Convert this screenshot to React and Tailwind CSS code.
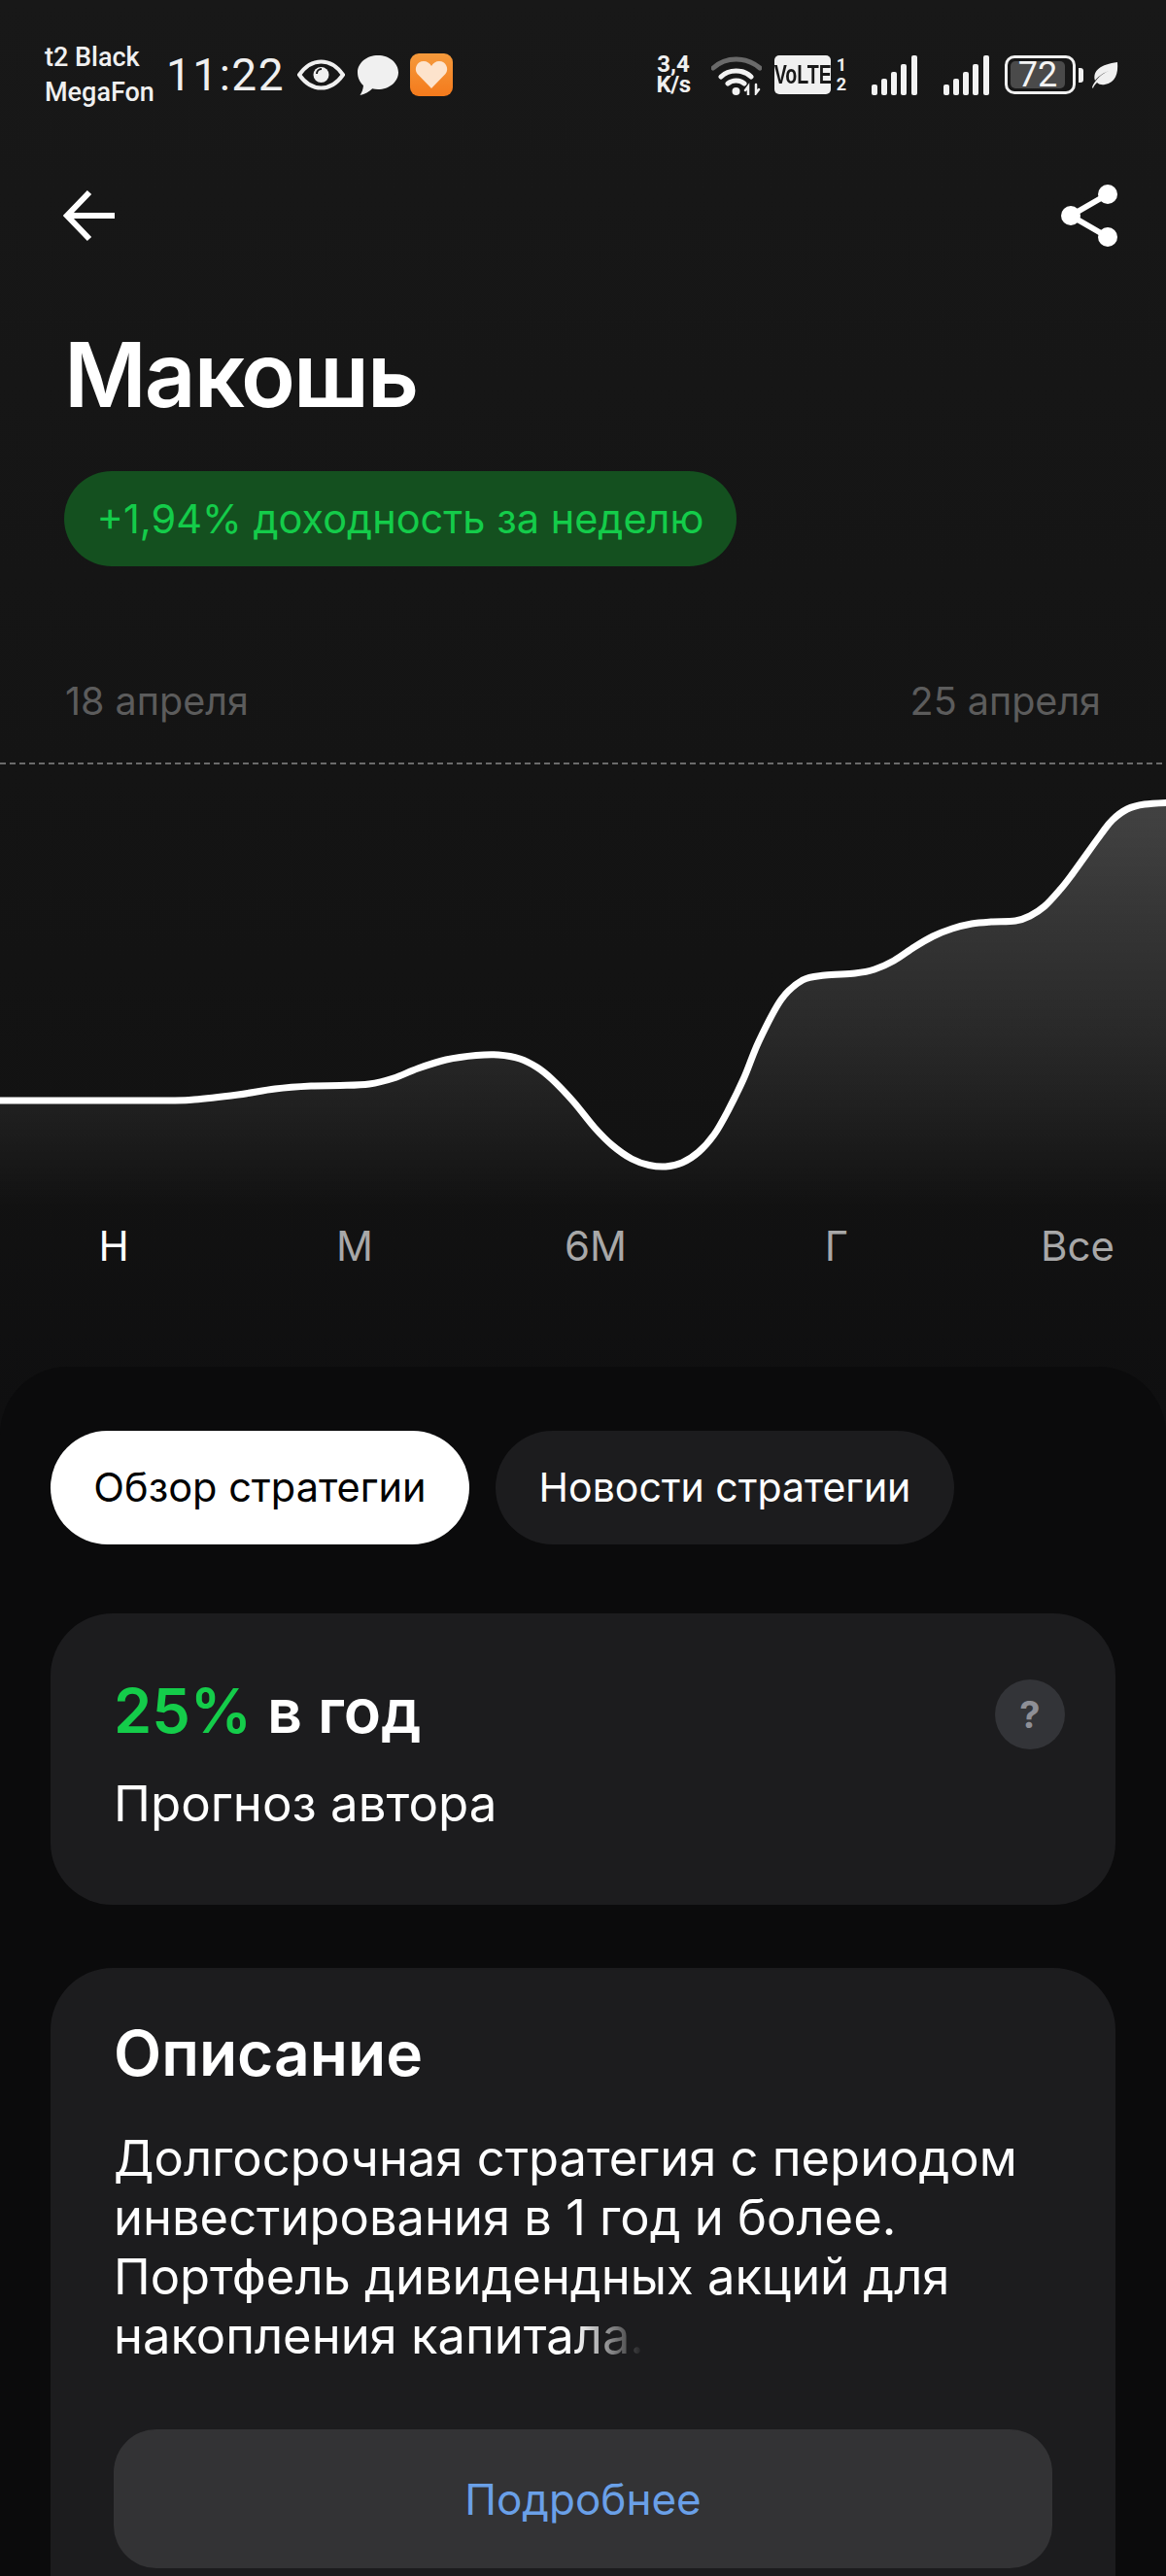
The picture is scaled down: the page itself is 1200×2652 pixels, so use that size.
import React from 'react';

const curvePoints = [
  [-10, 1134], [160, 1134], [200, 1133], [245, 1128], [283, 1122], [320, 1119], [350, 1118.500], [380, 1117], [405, 1111],
  [430, 1101], [459, 1092], [490, 1087.500], [513, 1087], [535, 1091], [553, 1100], [568, 1112], [590, 1135], [612, 1162],
  [630, 1180], [650, 1194], [668, 1200.500], [685, 1202], [702, 1198], [719, 1187], [735, 1169],
  [750, 1143], [766, 1110], [781, 1073], [804, 1030], [826, 1010], [849, 1005], [880, 1003], [900, 999], [920, 990],
  [941, 976], [960, 965], [980, 957], [1000, 952], [1020, 950], [1045, 949], [1060, 944], [1075, 934], [1090, 918], [1102, 903], [1133, 860],
  [1145, 845], [1160, 834], [1178, 829], [1210, 827],
];

// catmull-rom through the points, y shifted to the svg's own origin
function buildCurve(points, top) {
  const pts = points.map(([x, y]) => [x, y - top]);
  let d = `M${pts[0][0]} ${pts[0][1]}`;
  for (let i = 0; i < pts.length - 1; i++) {
    const p0 = pts[i - 1] || pts[i];
    const p1 = pts[i];
    const p2 = pts[i + 1];
    const p3 = pts[i + 2] || p2;
    const c1x = p1[0] + (p2[0] - p0[0]) / 6;
    const c1y = p1[1] + (p2[1] - p0[1]) / 6;
    const c2x = p2[0] - (p3[0] - p1[0]) / 6;
    const c2y = p2[1] - (p3[1] - p1[1]) / 6;
    d += ` C${c1x.toFixed(1)} ${c1y.toFixed(1)} ${c2x.toFixed(1)} ${c2y.toFixed(1)} ${p2[0]} ${p2[1]}`;
  }
  return d;
}

function Signal() {
  return (
    <svg width="47" height="41" viewBox="0 0 47 41" fill="#f2f2f2">
      <rect x="0" y="30" width="6" height="11" rx="2" />
      <rect x="10" y="24" width="6" height="17" rx="2" />
      <rect x="20" y="17" width="6" height="24" rx="2" />
      <rect x="30" y="9" width="6" height="32" rx="2" />
      <rect x="41" y="0" width="6" height="41" rx="2" />
    </svg>
  );
}

function StatusBar() {
  return (
    <div className="flex items-center pl-[46px] pr-[49px] pt-[41px] font-['Roboto',sans-serif] text-[#f0f0f0]">
      <div className="w-[125px] text-[27px] leading-[36px] font-medium">
        <div>t2 Black</div>
        <div>MegaFon</div>
      </div>
      <div className="w-[135px] text-[46px] leading-[56px] tracking-[1.5px]">11:22</div>
      <svg width="49" height="32" viewBox="0 0 49 32" fill="none">
        <path d="M2 16C9 6 16 2.500 24.500 2.500S40 6 47 16C40 26 33 29.500 24.500 29.500S9 26 2 16Z" stroke="#f0f0f0" strokeWidth="4" />
        <circle cx="24.500" cy="16" r="8" fill="#f0f0f0" />
        <path d="M20 15a5 5 0 0 1 5-5" stroke="#181818" strokeWidth="2" />
      </svg>
      <svg className="ml-[13px]" width="42" height="41" viewBox="0 0 42 41" fill="#f0f0f0">
        <path d="M21 0C32.600 0 42 7.800 42 17.500S32.600 35 21 35c-2 0-4-.2-5.800-.7C12 37.500 7.500 40 2.500 41c2-3 3.200-6 3.500-10C2.300 27.800 0 23 0 17.500 0 7.800 9.400 0 21 0Z" />
      </svg>
      <svg className="ml-[12px]" width="44" height="44" viewBox="0 0 44 44">
        <defs>
          <linearGradient id="app" x1="0" y1="0" x2="0" y2="1">
            <stop offset="0" stopColor="#f59a3c" />
            <stop offset="1" stopColor="#f47a1c" />
          </linearGradient>
        </defs>
        <rect width="44" height="44" rx="9" fill="url(#app)" />
        <path d="M22 36 7.500 21C3.500 16 7 8 14 8c3.500 0 6.500 2 8 5 1.500-3 4.500-5 8-5 7 0 10.500 8 6.500 13Z" fill="#fde3cc" />
      </svg>

      <div className="ml-auto flex items-center">
        <div className="w-[42px] text-center text-[24px] leading-[21px] font-bold">
          <div>3,4</div>
          <div className="tracking-[-0.5px]">K/s</div>
        </div>
        <svg className="ml-[18px]" width="52" height="41" viewBox="0 0 52 41" fill="none" strokeLinecap="round">
          <path d="M2 13C15 1 36 1 50 13" stroke="#6a6a6a" strokeWidth="5" />
          <path d="M10 22C18 14 33 14 41 22" stroke="#f2f2f2" strokeWidth="5" />
          <path d="M17 29C22 25 29 25 34 29" stroke="#f2f2f2" strokeWidth="5" />
          <circle cx="25.500" cy="37" r="4" fill="#f2f2f2" />
          <path d="M38 41V32l-3 4M46 30v9l3-4" stroke="#f2f2f2" strokeWidth="2.500" />
        </svg>
        <div className="ml-[13px] flex h-[40px] w-[58px] items-center justify-center overflow-hidden rounded-[5px] bg-[#f0f0f0] font-['Liberation_Sans',sans-serif] text-[28px] font-bold text-[#181818]">
          <span className="inline-block scale-x-[0.7] whitespace-nowrap">VoLTE</span>
        </div>
        <div className="ml-[5px] w-[12px] text-center text-[18px] leading-[20px] font-bold">
          <div>1</div>
          <div>2</div>
        </div>
        <div className="ml-[25px]"><Signal /></div>
        <div className="ml-[27px]"><Signal /></div>
        <div className="ml-[16px] flex h-[40px] w-[73px] items-center rounded-[10px] border-[3px] border-[#f0f0f0] p-[3px]">
          <div className="flex h-full w-[56px] items-center justify-center rounded-[5px] bg-[#4a4a4a] text-[36px] leading-none text-[#f4f4f4]">72</div>
        </div>
        <div className="ml-[3px] h-[15px] w-[5px] rounded-r-[3px] bg-[#f0f0f0]" />
        <svg className="ml-[9px]" width="27" height="27" viewBox="0 0 27 27" fill="#f0f0f0">
          <path d="M26 0C27 12 24 21 13 23 10 23.500 7 23 5 21 2 24 1 26 1 27L0 26C1 22 7 13 17 9 11 11 5 16 3 19 0 9 9 2 26 0Z" />
        </svg>
      </div>
    </div>
  );
}

function Header() {
  return (
    <div className="mt-[76px] flex items-center justify-between pl-[65px] pr-[49px]">
      <svg width="54" height="54" viewBox="0 0 54 54" fill="none" stroke="#fff" strokeWidth="6">
        <path d="M53 27H4M27 3 4 27l23 24" />
      </svg>
      <svg width="60" height="66" viewBox="0 0 60 66" fill="#fff">
        <path d="M49 11 11 33l38 22" fill="none" stroke="#fff" strokeWidth="6" />
        <circle cx="49" cy="11" r="10" />
        <circle cx="11" cy="33" r="10" />
        <circle cx="49" cy="55" r="10" />
      </svg>
    </div>
  );
}

function Chart() {
  const line = buildCurve(curvePoints, 780);
  return (
    <svg className="block" width="1200" height="470" viewBox="0 0 1200 470" fill="none">
      <defs>
        <linearGradient id="area" x1="0" y1="40" x2="0" y2="465" gradientUnits="userSpaceOnUse">
          <stop offset="0" stopColor="#fff" stopOpacity="0.2" />
          <stop offset="0.7" stopColor="#fff" stopOpacity="0.07" />
          <stop offset="1" stopColor="#fff" stopOpacity="0" />
        </linearGradient>
      </defs>
      <line x1="0" y1="7" x2="1200" y2="7" stroke="#6b6b6b" strokeWidth="2" strokeDasharray="6 4" />
      <path d={`${line} L1210 470 L-10 470 Z`} fill="url(#area)" />
      <path d={line} stroke="#fff" strokeWidth="7" />
    </svg>
  );
}

const periods = ['Н', 'М', '6М', 'Г', 'Все'];

export default function App() {
  return (
    <div className="h-[2652px] w-[1200px] overflow-hidden bg-gradient-to-b from-[#181818] via-[#121212] via-[45%] to-[#0f0f10] to-[55%] font-['Inter',sans-serif] text-white">
      <StatusBar />
      <Header />

      <h1 className="mt-[77px] pl-[66px] text-[92px] leading-[108px] font-semibold tracking-[-2px]">Макошь</h1>

      <div className="mt-[45px] ml-[66px] flex h-[98px] w-[692px] items-center justify-center rounded-full bg-[#14501f] text-[41.5px] text-[#14cc4a]">
        +1,94% доходность за неделю
      </div>

      <div className="mt-[112px] flex justify-between px-[67px] text-[39.5px] leading-[54px] text-[#5c5c5c]">
        <span>18 апреля</span>
        <span>25 апреля</span>
      </div>

      <div className="mt-[30px]"><Chart /></div>

      <div className="mt-[8px] ml-[-7px] grid w-[1240px] grid-cols-5 text-center text-[42px] leading-[52px] text-[#a8a8a8]">
        {periods.map((p, i) => (
          <span key={p} className={i === 0 ? 'text-white' : ''}>{p}</span>
        ))}
      </div>

      <div className="mt-[98px] rounded-t-[70px] bg-[#0b0b0c] px-[52px] pt-[66px] pb-[100px]">
        <div className="flex gap-[27px] text-[41px]">
          <div className="flex h-[117px] w-[431px] items-center justify-center rounded-full bg-white text-[41.500px] text-black">Обзор стратегии</div>
          <div className="flex h-[117px] w-[472px] items-center justify-center rounded-full bg-[#1c1c1e]">Новости стратегии</div>
        </div>

        <div className="mt-[71px] flex h-[300px] justify-between rounded-[64px] bg-[#1c1c1e] pt-[62px] pr-[52px] pl-[65px]">
          <div>
            <div className="text-[63px] leading-[76px] font-semibold">
              <span className="text-[#14cc4a]">25%</span> в год
            </div>
            <div className="mt-[28px] text-[51px] leading-[60px]">Прогноз автора</div>
          </div>
          <div className="mt-[6px] flex h-[72px] w-[72px] items-center justify-center rounded-full bg-[#333438] text-[38px] font-bold text-[#8e8f96]">?</div>
        </div>

        <div className="mt-[65px] h-[700px] rounded-[64px] bg-[#1c1c1e] px-[65px] pt-[50px]">
          <div className="text-[64px] leading-[76px] font-semibold">Описание</div>
          <p className="mt-[39px] text-[50.700px] leading-[61px]">
            Долгосрочная стратегия с периодом инвестирования в 1 год и более. Портфель дивидендных акций для накопления капита
            <span className="bg-gradient-to-r from-white to-transparent bg-clip-text text-transparent">ла.</span>
          </p>
          <div className="mt-[66px] flex h-[143px] items-center justify-center rounded-[44px] bg-[#333335] text-[44px] text-[#6aa0e8]">
            Подробнее
          </div>
        </div>
      </div>
    </div>
  );
}
